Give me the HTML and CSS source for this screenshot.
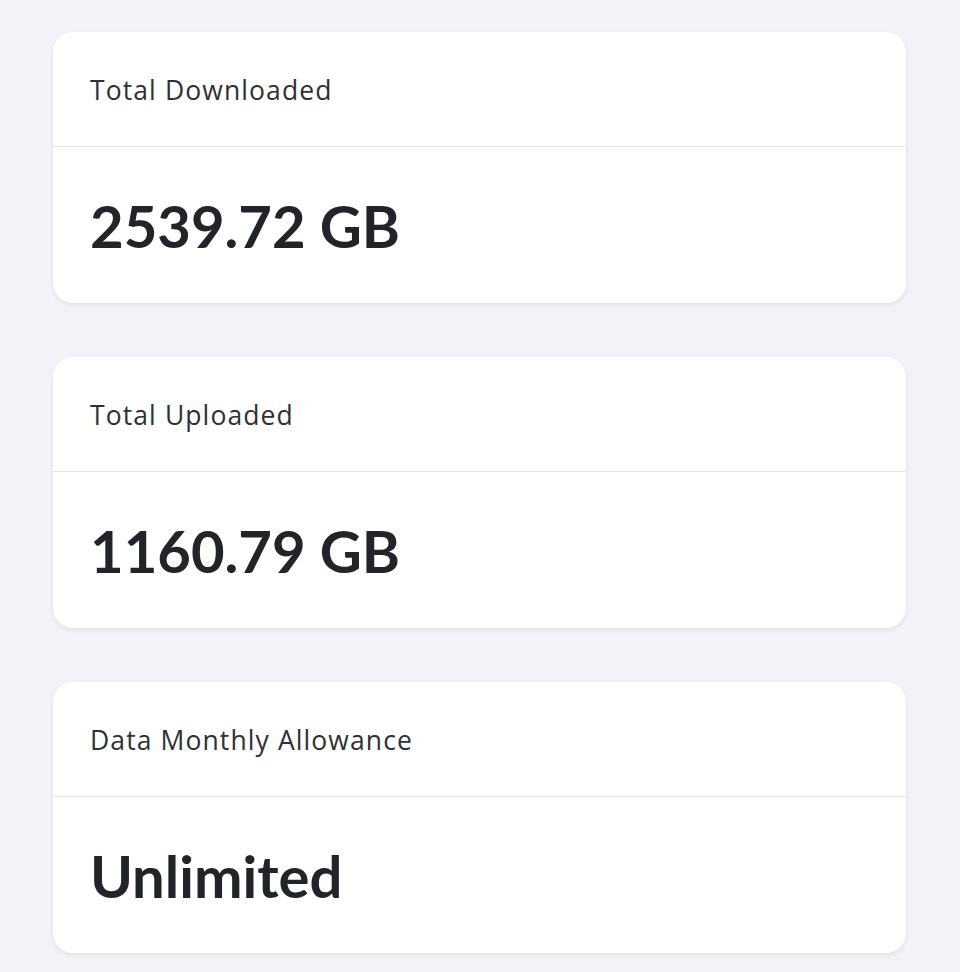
FILE: index.html
```html
<!DOCTYPE html>
<html lang="en">
<head>
<meta charset="utf-8">
<title>Usage</title>
<link rel="stylesheet" href="styles.css">
</head>
<body>
<main class="stats">
  <section class="card">
    <div class="card-header">Total Downloaded</div>
    <div class="card-body">2539.72 GB</div>
  </section>
  <section class="card">
    <div class="card-header">Total Uploaded</div>
    <div class="card-body">1160.79 GB</div>
  </section>
  <section class="card">
    <div class="card-header">Data Monthly Allowance</div>
    <div class="card-body">Unlimited</div>
  </section>
</main>
</body>
</html>
```
FILE: styles.css
```css
html, body {
  margin: 0;
  padding: 0;
  background: #f2f2f8;
}
body {
  font-family: Lato, "Noto Sans", sans-serif;
}
.stats {
  display: flex;
  flex-direction: column;
  gap: 54px;
  padding: 32px 54px 40px 53px;
}
.card {
  background: #ffffff;
  border-radius: 20px;
  box-shadow: 0 2px 4px rgba(20, 20, 50, 0.08);
  overflow: hidden;
}
.card-header {
  height: 115px;
  box-sizing: border-box;
  display: flex;
  align-items: center;
  padding: 2px 37px 0;
  font-family: "Open Sans", Lato, sans-serif;
  font-size: 26.5px;
  letter-spacing: 1.1px;
  color: #2f3034;
  border-bottom: 1px solid #e6e6ea;
}
.card-body {
  height: 156px;
  box-sizing: border-box;
  display: flex;
  align-items: center;
  padding: 0 37px;
  font-size: 58px;
  font-weight: 700;
  color: #212529;
}
```
